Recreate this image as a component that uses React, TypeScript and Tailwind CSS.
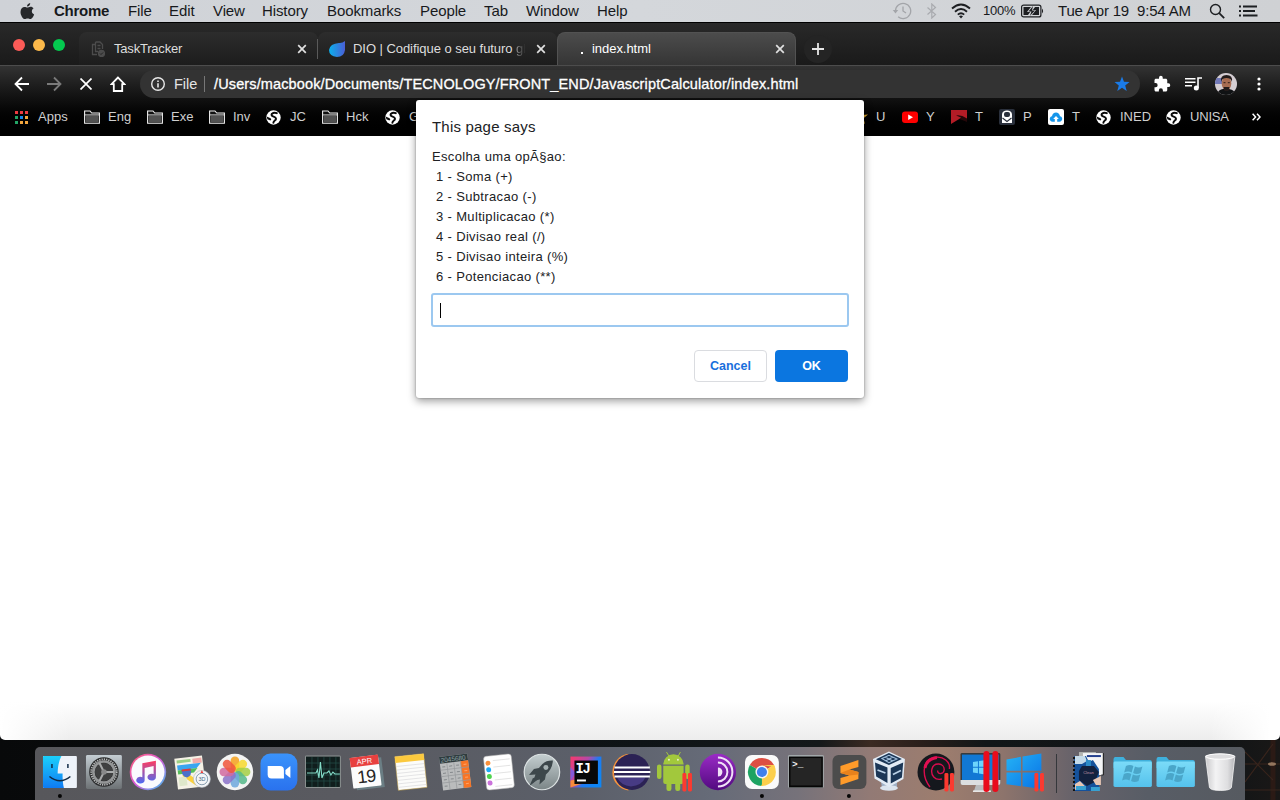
import type { ReactNode } from "react";

function MenuItem({ label, cls }: { label: string; cls: string }) {
  return <span className={`shrink-0 whitespace-pre ${cls}`}>{label}</span>;
}

function Tab({ icon, title, cls, titleCls, line }: { icon: ReactNode; title: ReactNode; cls: string; titleCls: string; line?: boolean }) {
  return (
    <div className={`flex h-[33px] shrink-0 items-center rounded-t-[8px] ${cls}`}>
      <span className="flex h-5 w-5 shrink-0 items-center justify-center">{icon}</span>
      <span className={`shrink-0 whitespace-nowrap text-[13px] leading-[18px] ${titleCls}`}>{title}</span>
      <svg className="shrink-0" width="10" height="10" viewBox="0 0 10 10">
        <path d="M1.2 1.2 8.8 8.8M8.8 1.2 1.2 8.8" stroke="#e0e0e0" strokeWidth="1.7" />
      </svg>
      {line ? <span className="ml-auto h-5 w-px bg-[#5a5a5a]" /> : null}
    </div>
  );
}

const Folder = () => (
  <svg width="16" height="14" viewBox="0 0 16 14">
    <path d="M.6 13.2V1h5.4l1.700 2h7.700v10.200Z" fill="#111" stroke="#f0f0f0" strokeWidth="1.100" />
    <path d="M1.700 5.700h12.600v6.700H1.700z" fill="#525252" />
    <path d="M1 4.900h14" stroke="#e8e8e8" strokeWidth=".9" />
  </svg>
);

const Globe = () => (
  <svg width="15" height="15" viewBox="0 0 15 15">
    <circle cx="7.500" cy="7.500" r="7.200" fill="#fff" />
    <path d="M10.800 3.200C8.500 2.200 5.300 3 5.500 4.900 5.700 6.900 9.900 6.300 10 8.700 10 10.700 7.500 10.300 7.400 12.800" fill="none" stroke="#0a0a0a" strokeWidth="2" strokeLinecap="round" />
    <path d="M.6 6.500 4.600 8.200 5.300 9.800 4.300 10.600 1.400 9.200Z" fill="#0a0a0a" />
  </svg>
);

const Apps = () => (
  <svg width="14" height="14" viewBox="0 0 14 14">
    <path d="M1 1h3v3H1zM6 1h3v3H6zM11 1h3v3h-3z" fill="#ee3b40" />
    <path d="M1 6h3v3H1zM1 11h3v3H1z" fill="#23a566" />
    <path d="M6 6h3v3H6z" fill="#1a86e8" />
    <path d="M11 6h3v3h-3zM6 11h3v3H6zM11 11h3v3h-3z" fill="#f4a63d" />
  </svg>
);

const YouTube = () => (
  <svg width="16" height="14" viewBox="0 0 16 14">
    <rect y="1.500" width="16" height="11.400" rx="3" fill="#f00" />
    <path d="M6.200 4.500v5.400l4.800-2.700z" fill="#fff" />
  </svg>
);

const RedMark = () => (
  <svg width="16" height="14" viewBox="0 0 16 14">
    <path d="M0 0h16v11l-7-2.500L0 14z" fill="#b31c26" />
    <path d="M5 5.500q5-1 11 3v3.500L8.500 9 10 7.500z" fill="#250709" />
  </svg>
);

const LockMark = () => (
  <svg width="16" height="16" viewBox="0 0 16 16">
    <rect width="16" height="16" rx="2" fill="#2a303c" />
    <path d="M3 14V5.500C3 0 13 0 13 5.500V14z" fill="#fff" />
    <rect x="5" y="3" width="6" height="5" rx="2" fill="#2a303c" />
    <path d="M3.500 9 8 12.500 12.500 9" fill="none" stroke="#2a303c" strokeWidth="1.100" />
  </svg>
);

const CloudMark = () => (
  <svg width="16" height="16" viewBox="0 0 16 16">
    <rect width="16" height="16" rx="2" fill="#fff" />
    <path d="M6.800 12.800H4.700C.8 12.500 1 7.800 4 7.300 4.300 2.300 11.500 2 12 7.300c3 .3 3.200 5.200-.7 5.500H9.200V10h1.600L8 6.900 5.200 10h1.600z" fill="#1595ea" />
  </svg>
);

const GoldStar = () => (
  <svg width="16" height="16" viewBox="0 0 16 16">
    <path d="m8 1 2 5 6-.5-4.500 3.700L13 15l-5-3-5 3 1.500-5.800L0 5.500 6 6z" fill="#d9a52e" />
  </svg>
);

function Bookmark({ icon, label, cls }: { icon: ReactNode; label: string; cls: string }) {
  return (
    <div className={`flex shrink-0 items-center ${cls}`}>
      <span className="w-6 shrink-0">{icon}</span>
      <span className="whitespace-nowrap">{label}</span>
    </div>
  );
}

const Bars = ({ x, y, h = 19 }: { x: number; y: number; h?: number }) => (
  <g fill="#fb3a30">
    <rect x={x} y={y} width="4" height={h} rx="1.400" />
    <rect x={x + 5.6} y={y} width="4" height={h} rx="1.400" />
  </g>
);

function DockIcon({ children, dot }: { children: ReactNode; dot?: boolean }) {
  return (
    <svg className="h-[53px] w-[43.87px] shrink-0 overflow-visible" viewBox="0 0 44 53" fontFamily="Liberation Sans, sans-serif">
      {children}
      {dot ? <circle cx="22" cy="49" r="2" fill="#050505" /> : null}
    </svg>
  );
}

const petals = ["#f5a11e", "#f7d92e", "#a5cf45", "#56b98a", "#6fa8dc", "#8b72c8", "#d26aa0", "#f0563c"];

const FolderWin = () => (
  <DockIcon>
    <path d="M2.500 13q0-3 2-3h8l2.500 3h24q2 0 2 2v6h-38.500z" fill="#3fb0dc" />
    <rect x="2.500" y="14.500" width="38.500" height="25.500" rx="1.500" fill="url(#fold)" />
    <path d="M15 19q4-2 7.500 0l-1.800 6.500q-3.500-2-7.500 0zM24 19.500q4 2 7.500 0l-1.800 6.500q-4 2-7.500 0zM12.900 27q4-2 7.500 0l-1.800 6.500q-3.500-2-7.500 0zM21.900 27.500q4 2 7.500 0l-1.800 6.500q-4 2-7.500 0z" fill="#4aa6c9" />
  </DockIcon>
);

function Dock() {
  return (
    <div className="flex h-[53px] w-[1210px] shrink-0 rounded-t-[5px] bg-[linear-gradient(90deg,#57575b_0%,#595a60_25%,#5b5f69_45%,#666b78_56%,#76727a_63%,#927a75_69%,#9d7d6e_75%,#8d746c_80%,#66626a_86%,#585d66_92%,#565a60_100%)] pl-[3px]">
      <svg width="0" height="0" className="absolute">
        <defs>
          <linearGradient id="fold" x2="0" y2="1"><stop stopColor="#7bdbf8" /><stop offset="1" stopColor="#55c2ec" /></linearGradient>
          <linearGradient id="find" x2="0" y2="1"><stop stopColor="#1bd0fb" /><stop offset="1" stopColor="#0f7bf3" /></linearGradient>
          <linearGradient id="silver" x2="0" y2="1"><stop stopColor="#c3ccd2" /><stop offset="1" stopColor="#6d7275" /></linearGradient>
          <linearGradient id="note" x2="0" y2="1"><stop stopColor="#ff3b60" /><stop offset="1" stopColor="#4a6cf5" /></linearGradient>
          <linearGradient id="ring" x2="1" y2="1"><stop stopColor="#ff5a6e" /><stop offset=".5" stopColor="#d85bd8" /><stop offset="1" stopColor="#35c7f4" /></linearGradient>
          <linearGradient id="zoomg" x2="0" y2="1"><stop stopColor="#3a93fb" /><stop offset="1" stopColor="#2a72ee" /></linearGradient>
          <linearGradient id="rock" x2="0" y2="1"><stop stopColor="#c4ced0" /><stop offset="1" stopColor="#7b8587" /></linearGradient>
          <linearGradient id="ij" x2="1" y2=".6"><stop stopColor="#f9396b" /><stop offset=".45" stopColor="#b548a8" /><stop offset=".7" stopColor="#1d7bf5" /><stop offset="1" stopColor="#0e86f5" /></linearGradient>
          <linearGradient id="tor" x2="0" y2="1"><stop stopColor="#9a2bc5" /><stop offset="1" stopColor="#520a80" /></linearGradient>
          <linearGradient id="win" x2="1" y2="1"><stop stopColor="#25b3f5" /><stop offset="1" stopColor="#0871e6" /></linearGradient>
          <linearGradient id="trash" x2="1" y2="0"><stop stopColor="#c9c9cb" /><stop offset=".35" stopColor="#f3f3f4" /><stop offset=".75" stopColor="#dedee0" /><stop offset="1" stopColor="#b5b5b8" /></linearGradient>
        </defs>
      </svg>
      <DockIcon dot>
        <rect x="5" y="9" width="34" height="32" rx="1" fill="#eef3fa" />
        <path d="M5 10q0-1 1-1h17.500c-2.500 5-3.600 10-3.800 17.500h5c-.2 6 .3 10 1.300 14.500H6q-1 0-1-1z" fill="url(#find)" />
        <path d="M14 17v4M30 17v4" stroke="#102b47" strokeWidth="1.500" />
        <path d="M11.500 29.500q10.500 8.500 21 0" fill="none" stroke="#12283f" strokeWidth="1.500" />
      </DockIcon>
      <DockIcon>
        <rect x="4" y="8" width="36" height="34" rx="1.500" fill="url(#silver)" />
        <circle cx="22" cy="25" r="14.800" fill="#2b2c2d" />
        <circle cx="22" cy="25" r="12.800" fill="none" stroke="#b8babb" strokeWidth="1.800" strokeDasharray="1.300 1" />
        <circle cx="22" cy="25" r="10.600" fill="none" stroke="#949697" strokeWidth="2.600" />
        <circle cx="22" cy="25" r="9" fill="#3f4041" />
        <path d="m22 25-4.500-9M22 25l10 0M22 25l-4.500 9" stroke="#a8aaab" strokeWidth="2" />
        <circle cx="22" cy="25" r="2.800" fill="#88898a" />
      </DockIcon>
      <DockIcon>
        <circle cx="22" cy="25" r="18.300" fill="url(#ring)" /><circle cx="22" cy="25" r="16.600" fill="#fafafe" />
        <path d="M16.400 16.300 30 13.600v16.500a4.200 3.400 0 1 1-2.300-3V19l-9 1.900v12.300a4.200 3.400 0 1 1-2.300-3z" fill="url(#note)" />
      </DockIcon>
      <DockIcon>
        <g transform="rotate(-7 20 25)">
          <rect x="6" y="10" width="28" height="31" fill="#f5f2e6" />
          <path d="M8 12h14v3H8z" fill="#9ccf84" /><path d="M24 12h9v5h-9z" fill="#f3aaa8" />
          <path d="M8 17h24l-5 5H8z" fill="#3aa5ef" /><path d="M8 22h20l-4 4H8z" fill="#54bd59" />
          <path d="m15 24 17 15H24L12 28z" fill="#fbd13c" /><path d="M8 29h8v9H8z" fill="#dfe8cb" />
          <path d="M12 22h9q1 7-4.500 8Q11 29 12 22z" fill="#4a70c9" /><path d="M12 21.500h9v2h-9z" fill="#d83c3c" />
        </g>
        <circle cx="32" cy="32" r="8.500" fill="#f4f6f8" stroke="#aeb6bd" strokeWidth=".6" /><circle cx="32" cy="32" r="5.800" fill="none" stroke="#7c92a5" strokeWidth=".9" />
        <text x="28.500" y="34" fontSize="5.500" fill="#476784">3D</text><path d="m30.600 26 1.400-3 1.400 3z" fill="#ed3c35" />
      </DockIcon>
      <DockIcon>
        <circle cx="22" cy="25" r="18.300" fill="#f4f4f3" />
        {petals.map((c, i) => (
          <rect key={c} x="17.700" y="9.500" width="8.600" height="15" rx="4.200" fill={c} fillOpacity=".86" transform={`rotate(${i * 45} 22 25)`} />
        ))}
      </DockIcon>
      <DockIcon>
        <rect x="3.500" y="6.500" width="37" height="37" rx="10" fill="url(#zoomg)" />
        <path d="M11 19h12q4 0 4 4v8.500H14.500q-3.800 0-3.800-4V19z" fill="#fff" /><path d="m28.500 23 5-4v12l-5-4z" fill="#fff" />
      </DockIcon>
      <DockIcon>
        <rect x="4" y="8.500" width="36" height="32.500" rx="1.500" fill="#8b9291" /><rect x="5" y="9.500" width="34" height="30.500" fill="#101e1d" />
        <path d="M5 16h34M5 22h34M5 28h34M5 34h34M11 10v30M17 10v30M23 10v30M29 10v30M35 10v30" stroke="#26504b" strokeWidth=".7" />
        <path d="M6 26h9l1.500-3 1.500 8 1.500-16 1.500 16 2-5h3l2-2 2 4 2-3 2 2h5" fill="none" stroke="#83dcc8" strokeWidth="1.100" />
      </DockIcon>
      <DockIcon>
        <g transform="rotate(-7 22 25)">
          <path d="M8 12h30v30H10z" fill="#6b7e84" /><rect x="6.500" y="9" width="28.500" height="31" rx="1" fill="#fcfcfc" /><path d="M6.500 9H35v9.500H6.500z" fill="#e8403f" />
          <text x="20.800" y="16.600" textAnchor="middle" fontSize="7.500" fill="#fff">APR</text>
          <text x="20.800" y="35.500" textAnchor="middle" fontSize="18" letterSpacing="-1" fill="#242424">19</text>
        </g>
      </DockIcon>
      <DockIcon>
        <g transform="rotate(-6 22 25)">
          <rect x="7.500" y="8" width="29" height="34" fill="#fcfcfa" stroke="#c9a548" strokeWidth=".5" /><path d="M7.500 8h29v6.500h-29z" fill="#fbc93e" />
          <path d="M8 18h28M8 21.500h28M8 25h28M8 28.500h28M8 32h28M8 35.500h28M8 39h28" stroke="#d5d6d8" strokeWidth=".6" />
        </g>
      </DockIcon>
      <DockIcon>
        <g transform="rotate(-7 22 25)">
          <rect x="8" y="8" width="28.500" height="34" fill="#babcbd" /><path d="M8 8h28.500v7H8z" fill="#303c3f" />
          <text x="34.500" y="14" textAnchor="end" fontSize="6.500" fill="#8ea3a6">2045680</text>
          <path d="M28.800 15h7.700v27h-7.700z" fill="#f87525" />
          <path d="M8 21.500h28.500M8 28h28.500M8 34.500h28.500M15 15v27M22 15v27M28.800 15v27" stroke="#96999b" strokeWidth=".7" />
          <path d="M10 18.500h3M17 18.500h3M24 18.500h3M10 25h3M17 25h3M24 25h3M10 31.500h3M17 31.500h3M24 31.500h3M10 38h3M24 38h3" stroke="#85898c" />
          <path d="M31.500 18.500h3M31.500 25h3M31.500 31.500h3M31.500 38h3" stroke="#ffa468" />
        </g>
      </DockIcon>
      <DockIcon>
        <g transform="rotate(-6 22 25)">
          <rect x="8" y="8" width="28" height="34" rx="3" fill="#fff" stroke="#aaa" strokeWidth=".5" />
          <path d="M17 19.500h17M17 26h17M17 32.500h17M17 13h17M17 39h17" stroke="#d8d8d8" strokeWidth=".7" />
          <circle cx="12" cy="15" r="2.500" fill="#fb913b" /><circle cx="12" cy="21.700" r="2.500" fill="#1fa9f7" /><circle cx="12" cy="28.400" r="2.500" fill="#4fd34e" /><circle cx="12" cy="35" r="2.500" fill="#cb73dc" />
        </g>
      </DockIcon>
      <DockIcon>
        <circle cx="22" cy="25" r="17.800" fill="url(#rock)" stroke="#dce2e3" strokeWidth="1.200" />
        <path d="M33 13.500q-9-.5-14 7.500l-5 1-5 6 6.500-.5-1 3-1.500 1 .5 2 2.500.5 1.500-1 2.500-.5-.5 5 5.500-5 1-5Q32.500 22 33 13.500z" fill="#3d474b" /><circle cx="26" cy="20.500" r="2.500" fill="#a6b1b3" />
        <path d="m13 31-3.500 8 6.500-5z" fill="#3d474b" />
      </DockIcon>
      <DockIcon>
        <rect x="6.500" y="9.500" width="31" height="31" fill="url(#ij)" /><path d="m6.500 40.500 12-4v-5l-12 2z" fill="#f98a3c" /><path d="m6.500 20 5 6-5 8z" fill="#8659d8" />
        <rect x="10.500" y="13.500" width="23.500" height="23.500" fill="#080808" />
        <text x="11.500" y="26.500" fontSize="14" fontWeight="700" fontFamily="Liberation Mono, monospace" letterSpacing="-1.200" fill="#fff">IJ</text><path d="M13 32.500h9v2h-9z" fill="#fff" />
      </DockIcon>
      <DockIcon>
        <path d="M20.500 6.800a18.500 18.500 0 0 0 0 36.700" fill="#f7943d" /><circle cx="24" cy="25" r="18" fill="#2b2254" />
        <path d="M9 30.500q4 8 14 9 11-1 14.500-9z" fill="#473b84" />
        <path d="M6.500 20.600h35.500M6 25h36.500M6.500 29.400h35.500" stroke="#fff" strokeWidth="2" />
      </DockIcon>
      <DockIcon>
        <path d="m14.500 5 3.500 5.500M28.500 5l-3 5.500" stroke="#a2c83c" strokeWidth="1" />
        <path d="M11.300 17.500a10.200 10.200 0 0 1 20.400 0z" fill="#a2c83c" /><circle cx="17" cy="12.800" r="1" fill="#e8f0cd" /><circle cx="26" cy="12.800" r="1" fill="#e8f0cd" />
        <path d="M11.300 18.800h20.400V35q0 2-2 2H13.300q-2 0-2-2z" fill="#a2c83c" />
        <rect x="5" y="17.500" width="4.500" height="14.500" rx="2.200" fill="#a2c83c" /><rect x="33.300" y="17.500" width="4.500" height="14.500" rx="2.200" fill="#a2c83c" />
        <rect x="14.500" y="34" width="5" height="10" rx="2.200" fill="#a2c83c" /><rect x="23.300" y="34" width="5" height="10" rx="2.200" fill="#a2c83c" />
        <Bars x={30.5} y={26} h={18.5} />
      </DockIcon>
      <DockIcon>
        <circle cx="22" cy="25" r="18.200" fill="url(#tor)" />
        <path d="M22 10.500a14.500 14.500 0 0 1 0 29M22 15.500a9.500 9.500 0 0 1 0 19" fill="none" stroke="#f0e2f7" strokeWidth="2" /><path d="M22 20.500a4.500 4.500 0 0 1 0 9z" fill="#f0e2f7" />
      </DockIcon>
      <DockIcon dot>
        <rect x="5" y="8" width="34" height="34" rx="7" fill="#fafafa" />
        <path d="M22 25 9.870 18A14 14 0 0 1 34.120 18z" fill="#dd4f43" /><path d="M22 25 34.120 18A14 14 0 0 1 22 39z" fill="#fccf4c" /><path d="M22 25V39A14 14 0 0 1 9.870 18z" fill="#1da362" />
        <path d="M22 18h12.100a14 14 0 0 1 .9 2.200z" fill="#fccf4c" /><path d="m28 28-6 11h-1z" fill="#fccf4c" />
        <circle cx="22" cy="25" r="6.500" fill="#f5f5f5" /><circle cx="22" cy="25" r="5.100" fill="#3f80ee" />
      </DockIcon>
      <DockIcon>
        <rect x="4" y="8" width="36" height="33" rx="1.500" fill="#a2a8aa" /><rect x="5" y="9.500" width="34" height="31" fill="#060606" /><rect x="6.500" y="11" width="31" height="27.500" fill="#252525" />
        <text x="8" y="19.500" fontSize="9.500" fontWeight="700" fontFamily="Liberation Mono, monospace" fill="#eee">&gt;_</text>
      </DockIcon>
      <DockIcon dot>
        <rect x="5.500" y="8" width="34" height="34" rx="6" fill="#4c4c4c" />
        <path d="M31.500 13 13.500 19v7l9 2.500-9 2.500v7l18-6v-7l-9-2.500 9-2.500z" fill="#ff9b2a" /><path d="m13.500 26 9 2.500 9-1V25l-9-2.500z" fill="#e8821c" />
      </DockIcon>
      <DockIcon>
        <path d="M10 34h16v6q-8 5-15 1z" fill="#9fb0c6" /><ellipse cx="18" cy="41" rx="9" ry="2.800" fill="#dbe4ee" />
        <path d="m18 4.500 16 7.500-1.500 20L18 40 3.500 31.500 2 12z" fill="#e2ebf5" />
        <path d="M18 6 31 12 18 18 5 12.300zM4 15.500l12.500 5V36L5.200 29.500zM32.300 15.500 19.800 21v15.500l11.200-6z" fill="#1b3656" />
        <path d="m11 11.500 7-3.200 8 3.700-8 3.700zM14 10l8 4M22 10l-7.500 4" stroke="#a2c0dd" strokeWidth="1.100" fill="none" /><path d="m6.500 23 8 3M22 27.500l8-4" stroke="#b9d0e6" strokeWidth="1.800" fill="none" />
      </DockIcon>
      <DockIcon>
        <circle cx="21" cy="25" r="18.500" fill="#15181d" />
        <path d="M15 40C7 30 6.500 13 19 10.500 29 8.500 35.500 15 34.500 22M27 32C20 34 15.500 28 17 22 19 14.500 29.500 16 29.300 22.500 29 27.500 22.500 28 22.700 23.500" fill="none" stroke="#d90c4d" strokeWidth="1.400" />
        <path d="M10 21q1.500-9 12-10.500" stroke="#e00f52" strokeWidth="3" fill="none" /><Bars x={29.5} y={26} h={18.5} />
      </DockIcon>
      <DockIcon>
        <rect x="1.500" y="6" width="40" height="31.500" rx="1.500" fill="#353a3e" /><rect x="3" y="7.500" width="37" height="25.500" fill="#1178d4" />
        <path d="m14 15 5-.7v5.500h-5zM20 14l6-.8v6.600h-6zM14 20.800h5v5.500l-5-.7zM20 20.800h6v6.600l-6-.8z" fill="#6dd5fb" />
        <path d="M1.500 33h40v3q0 2-2 2h-36q-2 0-2-2z" fill="#dcdee0" /><path d="M17 38h11l2 6H15z" fill="#b9bbbd" /><path d="M14 43.500h18v1.500H14z" fill="#eee" />
        <rect x="24.500" y="4" width="6" height="41" rx="3" fill="#e90c1c" /><rect x="33.500" y="4" width="6" height="41" rx="3" fill="#e90c1c" />
      </DockIcon>
      <DockIcon>
        <path d="m3.500 12.500 14.500-2.700v14H3.500zM19.600 9.500 38.500 6.500v17.300H19.600zM3.500 25.500H18v13.700l-14.500-2zM19.600 25.500h18.900v16.500l-18.900-2.600z" fill="url(#win)" />
        <Bars x={31.5} y={26} h={18.5} />
      </DockIcon>
      <span className="ml-[9.5px] mr-[9.5px] mt-[7px] h-[39px] w-px shrink-0 bg-[#35373b]" />
      <DockIcon>
        <path d="M12 5h17v7H12z" fill="#b3b5b3" /><path d="M16 6h20v22H16z" fill="#f3f4f6" /><path d="M20 8h14v2H20z" fill="#243f8e" />
        <path d="M7 9h12l3 6 4-2 6 9v22H7z" fill="#15529c" /><path d="M8 9h10l2 5-5 3H8z" fill="#c5dbea" />
        <path d="M15 19h12l5 6-4 10-8 4-8-6v-9z" fill="#13213e" /><path d="M19 13h5v6h-5z" fill="#2d8cc8" /><path d="m26 33 8-4v9h-5zM8 37l5-3 6 6-11 3z" fill="#e7c6b4" /><path d="M9 39h10v4H9zM24 40h9v4h-9z" fill="#38a1d2" />
        <text x="21.500" y="27" textAnchor="middle" fontSize="4" fill="#c493a5">Clean</text>
        <path d="M7 10v34" stroke="#111" strokeWidth="2" strokeDasharray="2 2" /><path d="M36.500 6v22h-2" stroke="#222" strokeWidth="1" fill="none" />
      </DockIcon>
      <FolderWin />
      <FolderWin />
      <DockIcon>
        <path d="M7.500 9q14.500-4 29.500 0l-3.500 31.500q-1 3-11 3t-11-3z" fill="url(#trash)" stroke="#f6f6f6" strokeWidth=".8" />
        <ellipse cx="22.200" cy="9.500" rx="14.300" ry="2.700" fill="#dcdcde" stroke="#fff" strokeWidth="1" />
      </DockIcon>
    </div>
  );
}

export default function App() {
  return (
    <div className="relative flex h-[800px] w-[1280px] flex-col overflow-hidden bg-[#0b0c0e] font-['Liberation_Sans',Arial,sans-serif]">
      <header className="flex h-[22px] shrink-0 items-center bg-[linear-gradient(90deg,#cfd2d7,#d4d7db_50%,#cfd1d4)] text-[15px] leading-[22px] tracking-[-0.1px] text-[#17191c]">
        <svg className="ml-[20px] w-[34px] shrink-0" width="34" height="17" viewBox="0 0 34 17">
          <path d="M10.200 0c.2 1.700-1.400 3.700-3.200 3.600C6.800 1.900 8.500.2 10.200 0zM7.300 4.600c.8 0 1.800-.9 3.300-.9 1.200 0 2.300.6 3 1.600-2.600 1.700-2.200 5 .5 6.100-.6 1.700-2.100 4.600-3.700 4.600-1 0-1.500-.6-2.800-.6s-1.800.6-2.800.6C2.800 16 .5 12 .5 8.900c0-3.200 2-5 4-5 1.200 0 2.100.7 2.800.7z" fill="#26282b" />
        </svg>
        <MenuItem label="Chrome" cls="w-[74px] font-bold tracking-[-0.25px]" />
        <MenuItem label="File" cls="w-[41px]" />
        <MenuItem label="Edit" cls="w-[44px]" />
        <MenuItem label="View" cls="w-[49px]" />
        <MenuItem label="History" cls="w-[65px]" />
        <MenuItem label="Bookmarks" cls="w-[93px]" />
        <MenuItem label="People" cls="w-[64px]" />
        <MenuItem label="Tab" cls="w-[42px]" />
        <MenuItem label="Window" cls="w-[71px]" />
        <MenuItem label="Help" cls="w-[295px]" />
        <svg className="shrink-0" width="20" height="18" viewBox="0 0 20 18" fill="none" stroke="#a3a5a9" strokeWidth="1.300">
          <path d="M3.500 9a7.600 7.600 0 1 1 2.600 5.700M11 4.500V9l3 2" /><path d="M.8 8h5.400L3.500 11.500z" fill="#a3a5a9" stroke="none" />
        </svg>
        <svg className="ml-[14px] shrink-0" width="12" height="16" viewBox="0 0 12 16" fill="none" stroke="#a9abaf" strokeWidth="1.200"><path d="m1.500 4.500 8 7L5.800 15V1l3.700 3.500-8 7" /></svg>
        <svg className="ml-[13px] shrink-0" width="20" height="16" viewBox="0 0 20 16" fill="none" stroke="#1d1f22" strokeWidth="1.900"><path d="M1 5.500q9-8 18 0M4 8.700q6-5.400 12 0M6.800 11.600q3.200-2.800 6.400 0" /><path d="m10 15.500-2-2.300q2-1.600 4 0z" fill="#1d1f22" stroke="none" /></svg>
        <span className="ml-[12px] w-[38px] shrink-0 text-[13px] tracking-[-0.2px]">100%</span>
        <svg className="shrink-0" width="24" height="14" viewBox="0 0 24 14"><rect x=".6" y="1.100" width="19.300" height="11.800" rx="2" fill="none" stroke="#1d1f22" strokeWidth="1.200" /><path d="M21 4.500q2.200 2.500 0 5z" fill="#1d1f22" /><path d="M2.500 3H10L6 8h3.200L7 11H2.500zM18 3v8H11l4-5h-3.200L14 3z" fill="#1d1f22" /><path d="m12 2-4.500 5.500h3L8.800 12 14 6.500h-3z" fill="#1d1f22" /></svg>
        <span className="ml-[13px] w-[151px] shrink-0 whitespace-pre tracking-[-0.18px]">Tue Apr 19  9:54 AM</span>
        <svg className="shrink-0" width="16" height="16" viewBox="0 0 16 16" fill="none" stroke="#1d1f22" strokeWidth="1.400"><circle cx="6.500" cy="6.500" r="5" /><path d="m10.200 10.200 5 5" strokeWidth="1.800" /></svg>
        <svg className="ml-[14px] shrink-0" width="19" height="14" viewBox="0 0 19 14" stroke="#1d1f22" strokeWidth="1.900"><path d="M0 2.500h2M4 2.500h14M0 7h2M4 7h12M0 11.500h2M4 11.500h14.500" /></svg>
      </header>

      <section className="flex h-[43px] shrink-0 items-end border-t border-black bg-gradient-to-b from-[#292929] to-[#1a1a1a] text-[#dedede]">
        <div className="flex h-[42px] w-[79px] shrink-0 items-center gap-[8px] pl-[13px] pt-[2px]">
          <i className="h-3 w-3 rounded-full bg-[#fc5b57]" />
          <i className="h-3 w-3 rounded-full bg-[#fdb94a]" />
          <i className="h-3 w-3 rounded-full bg-[#04c94f]" />
        </div>
        <Tab
          line
          cls="w-[239px] bg-gradient-to-b from-[#2d2d2d] to-[#1c1c1c] pl-[9px]"
          title="TaskTracker"
          titleCls="ml-[6px] w-[183px] tracking-[-0.2px]"
          icon={<svg width="14" height="16" viewBox="0 0 14 16" fill="none" stroke="#4c4c4c" strokeWidth="1.300"><path d="M4.500 1H9l2.500 2.500V8M4.500 1v9.500H7M4 3.500H1.500v10H6M6.500 4.500h3M6.500 7.500h3" /><circle cx="10.500" cy="12.500" r="3" fill="#4c4c4c" /><path d="m9 12.500 1 1 2-2" stroke="#222" strokeWidth="1" /></svg>}
        />
        <Tab
          cls="w-[239px] bg-gradient-to-b from-[#2d2d2d] to-[#1c1c1c] pl-[9px]"
          title={<>DIO | Codifique o seu futuro <span className="bg-gradient-to-r from-[#999] to-[#222] bg-clip-text text-transparent">gl</span></>}
          titleCls="ml-[6px] mr-[8px] w-[175px] tracking-[-0.05px]"
          icon={<svg width="17" height="16" viewBox="0 0 17 16"><defs><linearGradient id="dio"><stop stopColor="#0bb0ec" /><stop offset="1" stopColor="#4a5ed6" /></linearGradient></defs><path d="M10 2q3 .5 6-2v9q-1 7-8 7-8-1-8-7 1-6.500 10-7z" fill="url(#dio)" /></svg>}
        />
        <Tab
          cls="w-[239px] border-x border-t border-[#525252] border-b-0 bg-gradient-to-b from-[#4c4c4c] to-[#353535] pl-[14px] text-white"
          title="index.html"
          titleCls="w-[183px] tracking-[-0.05px]"
          icon={<i className="mt-2 h-[2px] w-[2px] bg-white" />}
        />
        <div className="ml-[8px] flex h-[33px] items-center">
          <span className="flex h-7 w-7 items-center justify-center rounded-full bg-[#242424]">
            <svg width="12" height="12" viewBox="0 0 12 12"><path d="M6 0v12M0 6h12" stroke="#e6e6e6" strokeWidth="1.800" /></svg>
          </span>
        </div>
      </section>

      <section className="flex h-[35px] shrink-0 items-center border-t border-[#4c4c4c] bg-gradient-to-b from-[#333] to-[#0f0f0f] pt-[2px] text-white">
        <svg className="ml-[14px] shrink-0" width="16" height="16" viewBox="0 0 16 16" fill="none" stroke="#fff" strokeWidth="1.800"><path d="M15 8H2M8 1.500 1.500 8 8 14.500" /></svg>
        <svg className="ml-[16px] shrink-0" width="16" height="16" viewBox="0 0 16 16" fill="none" stroke="#7a7a7a" strokeWidth="1.800"><path d="M1 8h13M8 1.500 14.500 8 8 14.500" /></svg>
        <svg className="ml-[18px] shrink-0" width="12" height="12" viewBox="0 0 12 12" fill="none" stroke="#fff" strokeWidth="1.700"><path d="m.5.5 11 11M11.500.5l-11 11" /></svg>
        <svg className="ml-[18px] shrink-0" width="16" height="16" viewBox="0 0 16 16" fill="none" stroke="#fff" strokeWidth="1.800"><path d="M8 1.500 1.500 8.200h2.300V15h8.400V8.200h2.300z" /></svg>
        <div className="ml-[14px] flex h-[28px] w-[1000px] shrink-0 items-center rounded-full bg-[#333] pl-[11px] text-[14.5px] leading-[20px]">
          <svg className="shrink-0" width="14" height="14" viewBox="0 0 14 14" fill="none" stroke="#e8e8e8" strokeWidth="1.400"><circle cx="7" cy="7" r="6.300" /><path d="M7 6.200v4.300M7 3.500V5" strokeWidth="1.600" /></svg>
          <span className="ml-[9px] w-[30px] text-[#e4e4e4]">File</span>
          <span className="h-4 w-px bg-[#777]" />
          <span className="ml-[9px] w-[900px] whitespace-nowrap tracking-[0.13px] [-webkit-text-stroke:0.3px_#fff]">/Users/macbook/Documents/TECNOLOGY/FRONT_END/JavascriptCalculator/index.html</span>
          <svg className="ml-auto mr-[10px] shrink-0" width="16" height="16" viewBox="0 0 16 16"><path d="m8 .5 2 5.200 5.500.3-4.300 3.500 1.500 5.400L8 11.800l-4.700 3.100 1.500-5.400L.5 6 6 5.700z" fill="#1a7be8" /></svg>
        </div>
        <svg className="ml-[13px] shrink-0" width="18" height="18" viewBox="0 0 24 24" fill="#fff"><path d="M20.500 11H19V7c0-1.100-.9-2-2-2h-4V3.500a2.500 2.500 0 0 0-5 0V5H4c-1.100 0-2 .9-2 2v3.800h1.500a2.700 2.700 0 0 1 0 5.400H2V20c0 1.100.9 2 2 2h3.800v-1.500a2.700 2.700 0 0 1 5.400 0V22H17c1.100 0 2-.9 2-2v-4h1.500a2.500 2.500 0 0 0 0-5z" /></svg>
        <svg className="ml-[14px] shrink-0" width="17" height="14" viewBox="0 0 17 14" fill="none" stroke="#fff" strokeWidth="1.600"><path d="M0 1.700h10.500M0 5.200h10.500M0 8.700h7M13 11V1h4" /><circle cx="11.300" cy="11" r="1.700" fill="#fff" /></svg>
        <svg className="ml-[13px] shrink-0" width="22" height="22" viewBox="0 0 22 22">
          <defs><clipPath id="face"><circle cx="11" cy="11" r="11" /></clipPath></defs>
          <g clipPath="url(#face)"><path d="M0 0h22v22H0z" fill="#d4cdd2" /><path d="M0 5h7v6H0z" fill="#7279b8" /><path d="M1 22q3-6 7-6h6q6 1 7 6z" fill="#101214" /><ellipse cx="11.500" cy="10.500" rx="4.800" ry="6.800" fill="#a86d52" /><path d="M6 9Q5 2 11.500 2 18 2 17 9q-1-4-5.500-4T6 9zM8.500 14h6l-1 4h-4z" fill="#231b1a" /><path d="M8.500 9.700h2M12.800 9.700h2" stroke="#2c1c18" /></g>
        </svg>
        <svg className="ml-[19px] shrink-0" width="6" height="14" viewBox="0 0 6 14" fill="#fff"><circle cx="3" cy="2" r="1.600" /><circle cx="3" cy="7" r="1.600" /><circle cx="3" cy="12" r="1.600" /></svg>
      </section>

      <section className="flex h-[36px] shrink-0 items-center bg-gradient-to-b from-[#101010] to-black pb-[2px] pl-[14px] text-[13px] leading-[18px] tracking-[0px] text-[#cfcfcf]">
        <Bookmark icon={<Apps />} label="Apps" cls="w-[70px]" />
        <Bookmark icon={<Folder />} label="Eng" cls="w-[63px]" />
        <Bookmark icon={<Folder />} label="Exe" cls="w-[62px]" />
        <Bookmark icon={<Folder />} label="Inv" cls="w-[57px]" />
        <Bookmark icon={<Globe />} label="JC" cls="w-[56px]" />
        <Bookmark icon={<Folder />} label="Hck" cls="w-[63px]" />
        <Bookmark icon={<Globe />} label="G" cls="w-[467px]" />
        <Bookmark icon={<GoldStar />} label="U" cls="w-[50px]" />
        <Bookmark icon={<YouTube />} label="Y" cls="w-[49px]" />
        <Bookmark icon={<RedMark />} label="T" cls="w-[48px]" />
        <Bookmark icon={<LockMark />} label="P" cls="w-[49px]" />
        <Bookmark icon={<CloudMark />} label="T" cls="w-[48px]" />
        <Bookmark icon={<Globe />} label="INED" cls="w-[70px]" />
        <Bookmark icon={<Globe />} label="UNISA" cls="w-[86px] tracking-[-0.2px]" />
        <svg width="9" height="8" viewBox="0 0 9 8" fill="none" stroke="#fff" strokeWidth="1.500"><path d="m.6.700 3 3.300-3 3.300M5 .7 8 4 5 7.300" /></svg>
      </section>

      <main className="h-[604px] shrink-0 rounded-b-[5px] bg-[linear-gradient(90deg,#fff_0,#fff0_70px,#fff0_1210px,#fff_1270px),linear-gradient(#fff_0,#fff_565px,#ededed_604px)]" />

      <footer className="flex h-[60px] shrink-0 items-end bg-[linear-gradient(90deg,#08090a_0%,#0f1417_50%,#14181a_64%,#3b2a22_68%,#2a1f1b_72%,#121618_77%,#101416_95%,#1a1817_100%)] pl-[35px]">
        <Dock />
        <svg className="h-[60px] w-[35px] shrink-0" viewBox="0 0 35 60" fill="none" stroke="#38241c">
          <path d="M28 0v60" strokeWidth="5" stroke="#2b1a15" />
          <path d="M0 12l28 28M0 42 28 4M0 50h35M0 24h35" strokeWidth="1.200" />
          <ellipse cx="27" cy="24" rx="4" ry="1.800" fill="#94765e" stroke="none" />
        </svg>
      </footer>

      <div className="absolute left-[416px] top-[100px] flex h-[298px] w-[448px] flex-col rounded-[3px] bg-white px-4 pt-[17px] text-[#202124] shadow-[0_0_2px_rgba(0,0,0,0.35),0_3px_8px_rgba(0,0,0,0.4)]">
        <h1 className="h-[30px] text-[15px] leading-[20px] tracking-[0.2px]">This page says</h1>
        <div className="whitespace-pre text-[13px] leading-[20px] tracking-[0.35px]">
          <p>Escolha uma opÃ§ao:</p>
          <p> 1 - Soma (+)</p>
          <p> 2 - Subtracao (-)</p>
          <p> 3 - Multiplicacao (*)</p>
          <p> 4 - Divisao real (/)</p>
          <p> 5 - Divisao inteira (%)</p>
          <p> 6 - Potenciacao (**)</p>
        </div>
        <div className="-mx-px mt-[6px] flex h-[34px] shrink-0 items-center rounded-[3px] border-2 border-[#9cc8f0] pl-[7px]">
          <i className="h-[15px] w-px bg-black" />
        </div>
        <div className="mt-[23px] flex justify-end gap-2 text-[13px] font-bold">
          <button className="h-[32px] w-[73px] rounded-[4px] border border-[#dadce0] text-[12.5px] text-[#1a6fdc]">Cancel</button>
          <button className="h-[32px] w-[73px] rounded-[4px] bg-[#0b76e0] text-[12.5px] text-white">OK</button>
        </div>
      </div>
    </div>
  );
}
